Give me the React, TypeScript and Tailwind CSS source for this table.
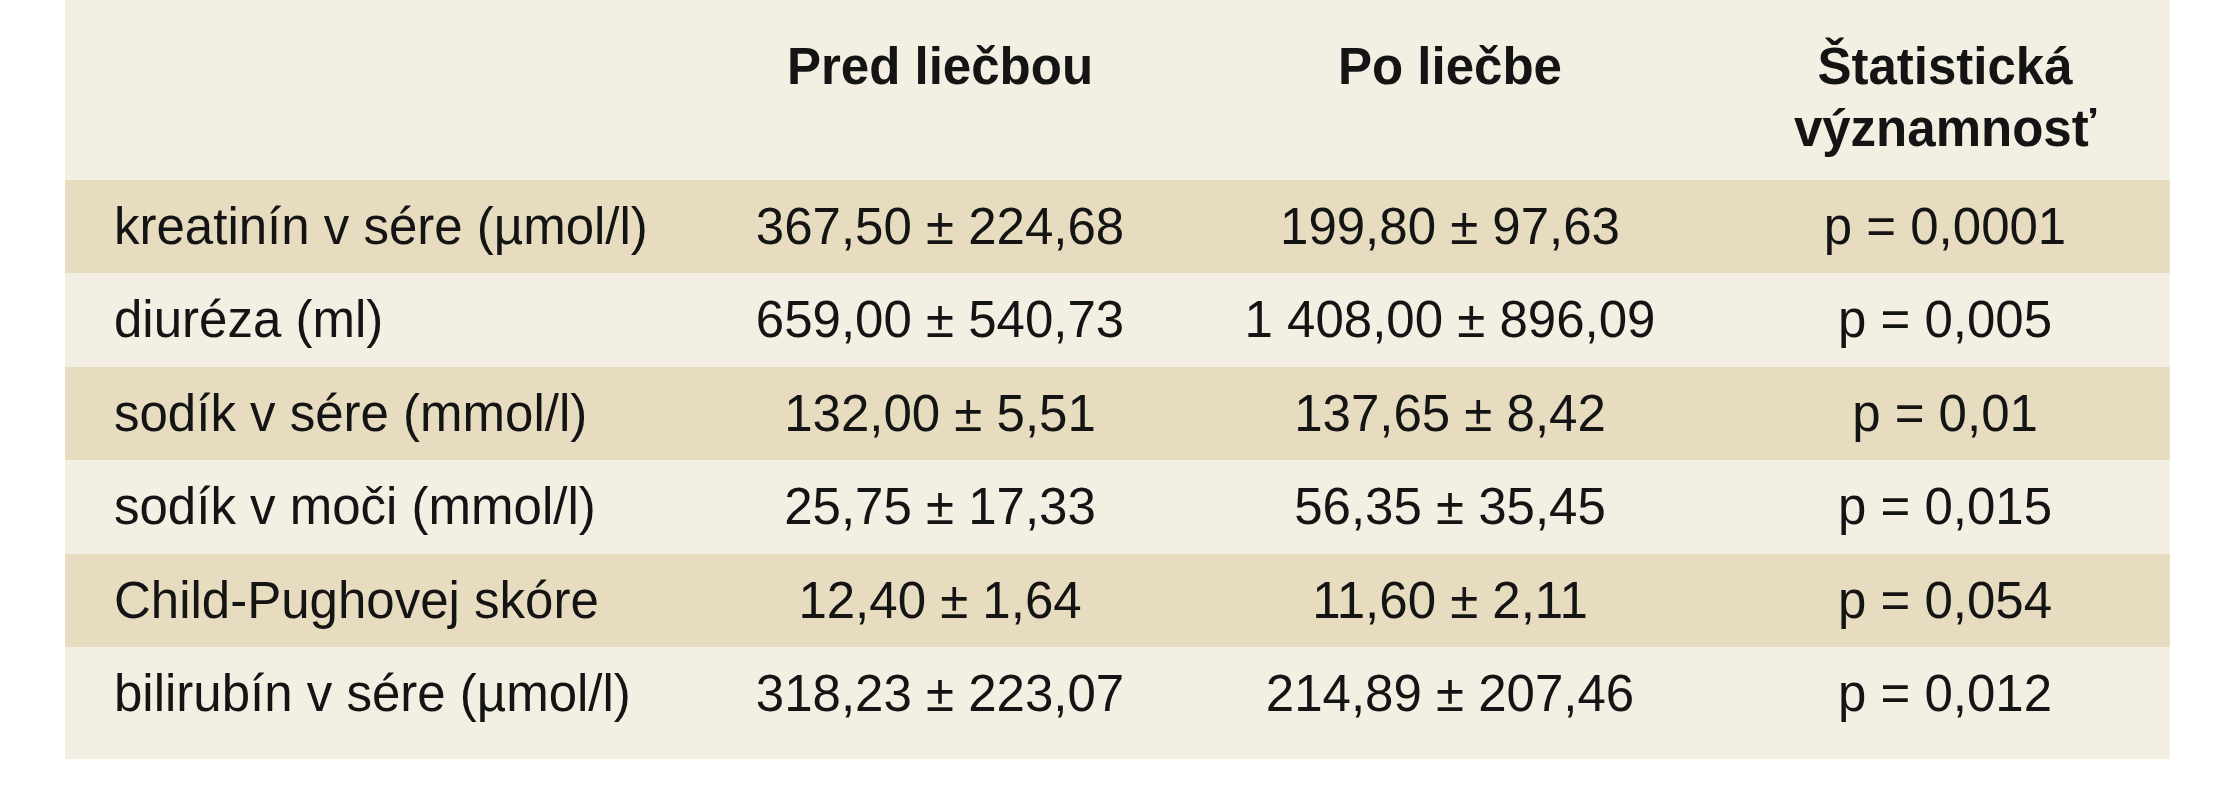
const rows = [
  ["kreatinín v sére (µmol/l)", "367,50 ± 224,68", "199,80 ± 97,63", "p = 0,0001"],
  ["diuréza (ml)", "659,00 ± 540,73", "1 408,00 ± 896,09", "p = 0,005"],
  ["sodík v sére (mmol/l)", "132,00 ± 5,51", "137,65 ± 8,42", "p = 0,01"],
  ["sodík v moči (mmol/l)", "25,75 ± 17,33", "56,35 ± 35,45", "p = 0,015"],
  ["Child-Pughovej skóre", "12,40 ± 1,64", "11,60 ± 2,11", "p = 0,054"],
  ["bilirubín v sére (µmol/l)", "318,23 ± 223,07", "214,89 ± 207,46", "p = 0,012"],
];

const cols = "grid grid-cols-[635px_480px_540px_450px]";

export default function App() {
  return (
    <div className="min-h-[800px] bg-white pl-[65px] text-[51px] leading-[62px] text-[#141414] font-['Liberation_Sans',Arial,sans-serif]">
      <div className="w-[2105px] bg-[#f4efe3] pb-[19px]">
        <div className={`${cols} h-[180px] pt-[36px] font-bold`}>
          <div />
          <div className="text-center">Pred liečbou</div>
          <div className="text-center">Po liečbe</div>
          <div className="text-center">
            Štatistická
            <br />
            významnosť
          </div>
        </div>
        {rows.map((r, i) => (
          <div
            key={r[0]}
            className={`${cols} h-[93.4px] pt-[16px] ${i % 2 === 0 ? "bg-[#e7dcc0]" : ""}`}
          >
            <div className="pl-[49px] whitespace-nowrap">{r[0]}</div>
            <div className="text-center whitespace-nowrap">{r[1]}</div>
            <div className="text-center whitespace-nowrap">{r[2]}</div>
            <div className="text-center whitespace-nowrap">{r[3]}</div>
          </div>
        ))}
      </div>
    </div>
  );
}
